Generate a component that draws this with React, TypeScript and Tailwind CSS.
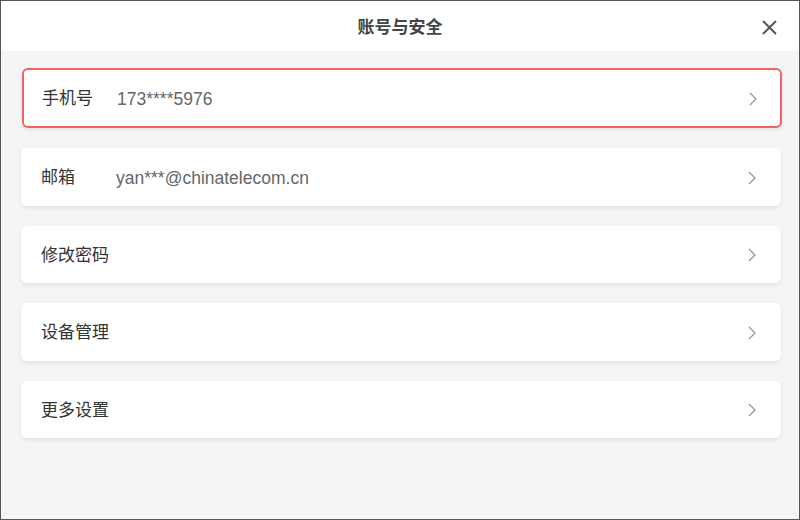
import React from 'react';

interface RowProps {
  label: string;
  value?: string;
  active?: boolean;
}

const Chevron = () => (
  <svg className="w-[10px] h-[16px] text-[#9a9a9a]" viewBox="0 0 10 16" fill="none" stroke="currentColor" strokeWidth="1.4">
    <polyline points="2,2 8,8 2,14" />
  </svg>
);

const Row: React.FC<RowProps> = ({ label, value, active }) => (
  <div
    className={
      active
        ? 'flex items-center h-[60px] w-[760px] ml-[1px] px-[18px] pt-[2px] bg-white rounded-[6px] border-2 border-[#f56262] shadow-[0_2px_4px_rgba(0,0,0,0.08)]'
        : 'flex items-center h-[57.5px] w-[760px] px-5 pt-[2px] bg-white rounded-[6px] shadow-[0_2px_4px_rgba(0,0,0,0.08)]'
    }
  >
    <span className="w-[75px] text-[17px] text-[#333]">{label}</span>
    {value && <span className="text-[17.5px] text-[#666]">{value}</span>}
    <span className="ml-auto mr-[4px] flex items-center">
      <Chevron />
    </span>
  </div>
);

const App: React.FC = () => {
  return (
    <div
      className="w-[800px] h-[520px] border border-[#555] flex flex-col bg-[#f4f5f7]"
      style={{ fontFamily: '"Liberation Sans", "Noto Sans CJK SC", sans-serif' }}
    >
      <div className="relative h-[50px] bg-white flex items-center justify-center pt-[4px]">
        <span className="text-[17px] font-bold text-[#444]">账号与安全</span>
        <button className="absolute right-[22px] top-[19px] text-[#555]">
          <svg className="w-[15px] h-[15px]" viewBox="0 0 15 15" fill="none" stroke="currentColor" strokeWidth="2">
            <line x1="1" y1="1" x2="14" y2="14" />
            <line x1="14" y1="1" x2="1" y2="14" />
          </svg>
        </button>
      </div>
      <div className="flex flex-col gap-5 pl-5 pt-[17px]">
        <Row label="手机号" value="173****5976" active />
        <Row label="邮箱" value="yan***@chinatelecom.cn" />
        <Row label="修改密码" />
        <Row label="设备管理" />
        <Row label="更多设置" />
      </div>
    </div>
  );
};

export default App;
